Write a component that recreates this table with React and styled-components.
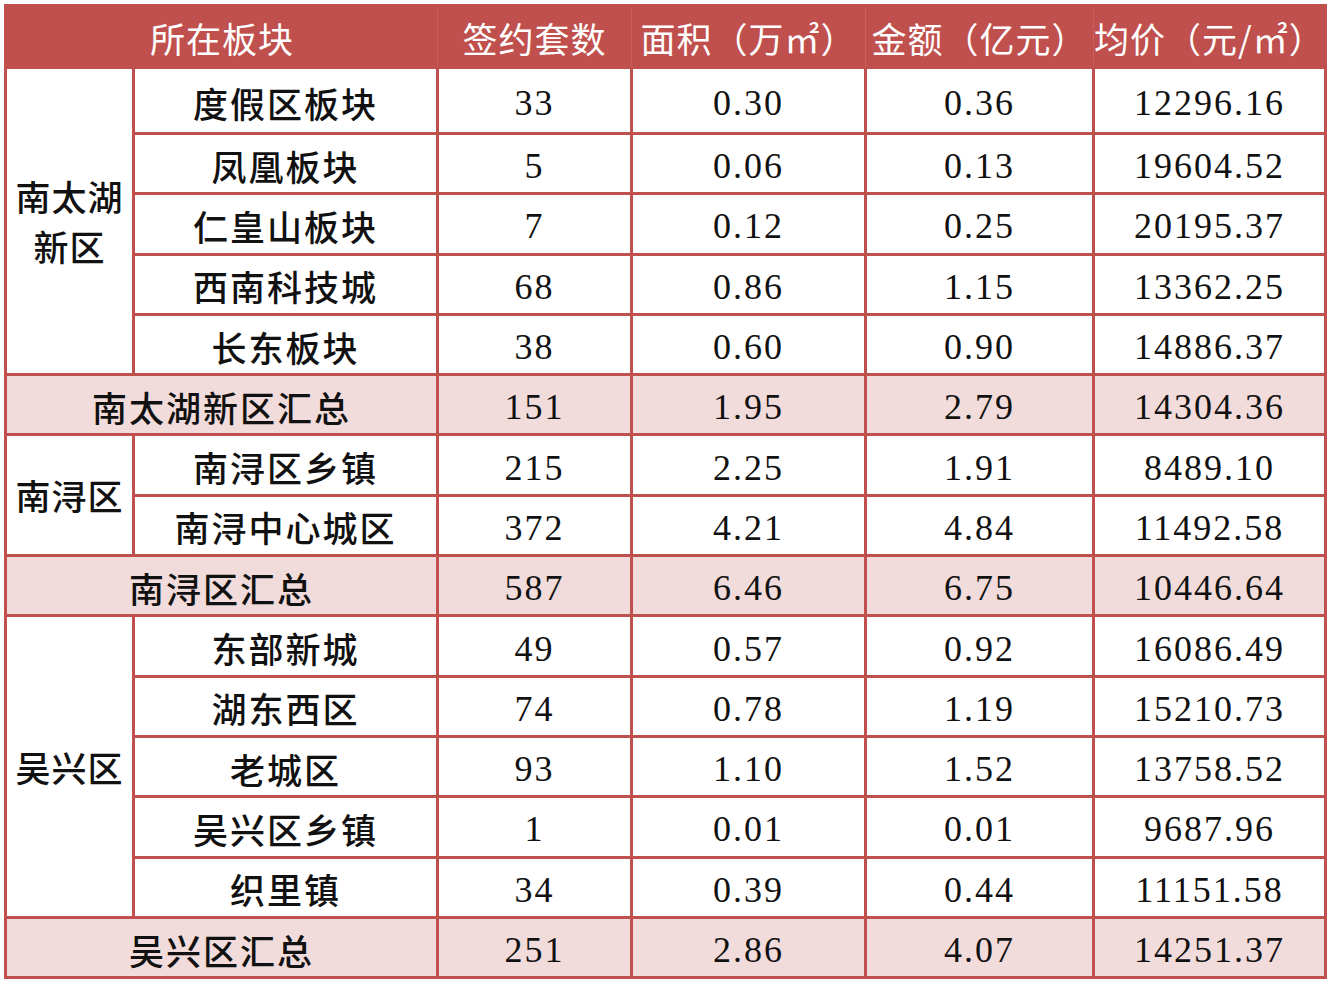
import React from "react";
import styled, { createGlobalStyle } from "styled-components";

const GlobalStyle = createGlobalStyle`
  body {
    margin: 0;
    background: #ffffff;
    font-family: "Noto Sans CJK SC", sans-serif;
  }
`;

const RED = "#c0504d";

const Page = styled.div`
  padding: 4px 0 0 4px;
`;

const Table = styled.table`
  width: 1320px;
  table-layout: fixed;
  border-collapse: collapse;
  border: 3px solid ${RED};
`;

const HeadRow = styled.tr`
  height: 62px;
  background: ${RED};
`;

const HeadCell = styled.th`
  color: #ffffff;
  font-family: "Noto Sans CJK SC", sans-serif;
  font-weight: 400;
  font-size: 35px;
  letter-spacing: 1px;
  white-space: nowrap;
  padding: 2px 0 0;
  text-align: center;
  border-left: 1px solid #c95e5b;
`;

const Row = styled.tr`
  height: ${(p) => (p.$first ? 66 : 60.3)}px;
  background: ${(p) => (p.$sum ? "#f2dcdb" : "#ffffff")};
`;

const NameCell = styled.td`
  border: 3px solid ${RED};
  padding: 4px 0 0;
  text-align: center;
  font-family: "Noto Sans CJK SC", sans-serif;
  font-weight: 500;
  font-size: 35px;
  line-height: 48px;
  letter-spacing: 2px;
  color: #111;
`;

const AreaCell = styled(NameCell)`
  letter-spacing: 1px;
  line-height: 50px;
  padding: 0;
`;

const NumCell = styled.td`
  border: 3px solid ${RED};
  padding: 5px 0 0;
  text-align: center;
  font-family: "Liberation Serif", "DejaVu Serif", serif;
  font-size: 36px;
  letter-spacing: 2px;
  color: #111;
`;

const groups = [
  {
    area: "南太湖新区",
    rows: [
      ["度假区板块", "33", "0.30", "0.36", "12296.16"],
      ["凤凰板块", "5", "0.06", "0.13", "19604.52"],
      ["仁皇山板块", "7", "0.12", "0.25", "20195.37"],
      ["西南科技城", "68", "0.86", "1.15", "13362.25"],
      ["长东板块", "38", "0.60", "0.90", "14886.37"],
    ],
    sum: ["南太湖新区汇总", "151", "1.95", "2.79", "14304.36"],
  },
  {
    area: "南浔区",
    rows: [
      ["南浔区乡镇", "215", "2.25", "1.91", "8489.10"],
      ["南浔中心城区", "372", "4.21", "4.84", "11492.58"],
    ],
    sum: ["南浔区汇总", "587", "6.46", "6.75", "10446.64"],
  },
  {
    area: "吴兴区",
    rows: [
      ["东部新城", "49", "0.57", "0.92", "16086.49"],
      ["湖东西区", "74", "0.78", "1.19", "15210.73"],
      ["老城区", "93", "1.10", "1.52", "13758.52"],
      ["吴兴区乡镇", "1", "0.01", "0.01", "9687.96"],
      ["织里镇", "34", "0.39", "0.44", "11151.58"],
    ],
    sum: ["吴兴区汇总", "251", "2.86", "4.07", "14251.37"],
  },
];

const Nums = ({ values }) =>
  values.map((v, i) => <NumCell key={i}>{v}</NumCell>);

export default function App() {
  return (
    <Page>
      <GlobalStyle />
      <Table>
        <colgroup>
          <col style={{ width: 128 }} />
          <col style={{ width: 304 }} />
          <col style={{ width: 194 }} />
          <col style={{ width: 234 }} />
          <col style={{ width: 228 }} />
          <col style={{ width: 232 }} />
        </colgroup>
        <thead>
          <HeadRow>
            <HeadCell colSpan={2}>所在板块</HeadCell>
            <HeadCell>签约套数</HeadCell>
            <HeadCell>面积（万㎡）</HeadCell>
            <HeadCell>金额（亿元）</HeadCell>
            <HeadCell>均价（元/㎡）</HeadCell>
          </HeadRow>
        </thead>
        <tbody>
          {groups.map((g, gi) => (
            <React.Fragment key={g.area}>
              {g.rows.map((r, ri) => (
                <Row key={r[0]} $first={gi === 0 && ri === 0}>
                  {ri === 0 && (
                    <AreaCell rowSpan={g.rows.length}>{g.area}</AreaCell>
                  )}
                  <NameCell>{r[0]}</NameCell>
                  <Nums values={r.slice(1)} />
                </Row>
              ))}
              <Row $sum>
                <NameCell colSpan={2}>{g.sum[0]}</NameCell>
                <Nums values={g.sum.slice(1)} />
              </Row>
            </React.Fragment>
          ))}
        </tbody>
      </Table>
    </Page>
  );
}
